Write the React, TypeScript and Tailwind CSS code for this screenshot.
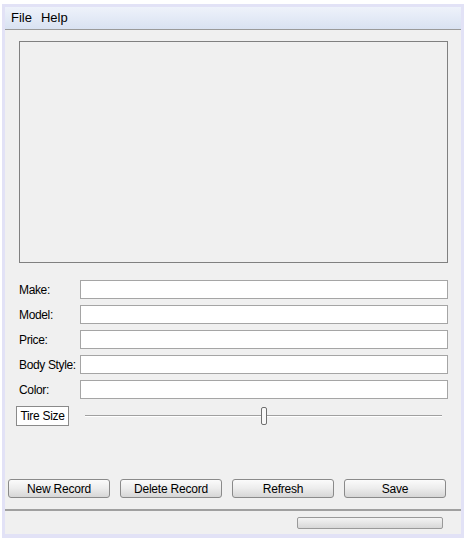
import React from "react";

const font = { fontFamily: '"Liberation Sans", Arial, sans-serif' };

function Field({ label }: { label: string }) {
  return (
    <div className="flex items-center h-[19px]">
      <div className="w-[61px] text-[12px] tracking-[-0.35px] text-black leading-none">{label}</div>
      <div className="flex-1 h-[19px] bg-white border border-[#a5a5a5]" />
    </div>
  );
}

function Btn({ label }: { label: string }) {
  return (
    <div className="w-[102px] h-[19px] rounded-[3px] border border-[#8a8a8a] bg-gradient-to-b from-[#fbfbfb] via-[#ececec] to-[#d6d6d6] flex items-center justify-center text-[12px] tracking-[-0.2px] text-black leading-none">
      {label}
    </div>
  );
}

export default function App() {
  return (
    <div className="w-[467px] h-[541px] bg-white pt-[4px] pl-[2px]" style={font}>
      <div className="w-[462px] h-[534px] bg-[#e2e2f6] p-[3px] pb-[4px]">
        <div className="w-[456px] h-[527px] bg-[#f0f0f0] flex flex-col">
          <div className="h-[23px] bg-gradient-to-b from-[#eef2fa] to-[#d9e2f2] border-b border-[#9a9a9a] flex items-center pl-[6px] gap-[9px] text-[13px] text-black">
            <span>File</span>
            <span>Help</span>
          </div>
          <div className="flex flex-col pl-[14px] pr-[13px] pt-[11px]">
            <div className="h-[222px] border border-[#808080] bg-[#f0f0f0]" />
            <div className="flex flex-col gap-[6px] mt-[17px]">
              <Field label="Make:" />
              <Field label="Model:" />
              <Field label="Price:" />
              <Field label="Body Style:" />
              <Field label="Color:" />
            </div>
            <div className="flex items-center mt-[7px] -ml-[3px]">
              <div className="w-[53px] h-[20px] bg-white border border-[#8a8a8a] flex items-center justify-center text-[12px] tracking-[-0.3px] leading-none">
                Tire Size
              </div>
              <div className="relative ml-[16px] w-[357px] h-[20px] flex items-center">
                <div className="w-full h-[2px] border-t border-[#a0a0a0] border-b border-b-white" />
                <div className="absolute left-[176px] top-[1px] w-[6px] h-[18px] rounded-[2px] border border-[#707070] bg-[#f8f8f8]" />
              </div>
            </div>
          </div>
          <div className="flex-1" />
          <div className="flex gap-[10px] px-[3px] pb-[11px]">
            <Btn label="New Record" />
            <Btn label="Delete Record" />
            <Btn label="Refresh" />
            <Btn label="Save" />
          </div>
          <div className="h-[25px] border-t-2 border-[#a0a0a0] flex items-center justify-end pr-[18px]">
            <div className="w-[146px] h-[12px] rounded-[2px] border border-[#9a9a9a] bg-gradient-to-b from-[#f4f4f4] to-[#d8d8d8]" />
          </div>
        </div>
      </div>
    </div>
  );
}
